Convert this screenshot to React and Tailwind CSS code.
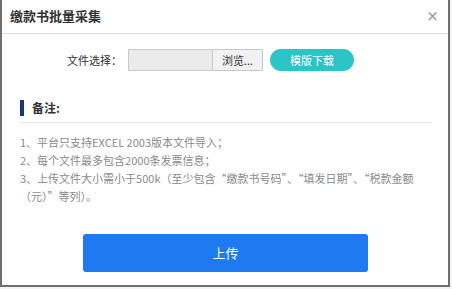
import React from 'react';

const font = { fontFamily: '"Microsoft YaHei", "Noto Sans CJK SC", "Noto Sans", sans-serif' };

const notes = [
    '1、平台只支持EXCEL 2003版本文件导入；',
    '2、每个文件最多包含2000条发票信息；',
];

const App = () => {
    return (
        <div className="w-[452px] h-[289px] bg-[#f4f4f4]" style={font}>
            <div className="w-[450px] h-[287px] bg-white border-l-2 border-r-2 border-b-2 border-[#6f6f6f] flex flex-col">
                {/* Header */}
                <div className="h-[34px] shrink-0 flex items-center justify-between pl-[8px] pr-[9px] border-b border-[#dcdcdc]">
                    <h1 className="text-[13px] font-bold text-[#333] leading-none -mt-[2px]">缴款书批量采集</h1>
                    <button className="text-[#999] text-[13px] font-bold leading-none -mt-[2px]">×</button>
                </div>

                {/* File row */}
                <div className="flex items-center mt-[15px] pl-[65px]">
                    <span className="text-[11px] text-[#333] w-[61px]">文件选择：</span>
                    <div className="w-[85px] h-[22px] bg-[#ebebeb] border border-[#c8c8c8]"></div>
                    <button className="w-[50px] h-[22px] bg-[#f2f2f2] border border-l-0 border-[#c8c8c8] text-[11px] text-[#333]">浏览...</button>
                    <button className="ml-[7px] w-[84px] h-[22px] rounded-full bg-[#2cc5c7] text-white text-[11px]">模版下载</button>
                </div>

                {/* Notes */}
                <div className="mt-[29px] pl-[18px] pr-[16px]">
                    <div className="flex items-center h-[16px]">
                        <span className="w-[4px] h-[16px] bg-[#1d3578]"></span>
                        <span className="ml-[8px] text-[12px] font-bold text-[#333]">备注:</span>
                    </div>
                    <div className="mt-[6px] border-b border-[#e6e6e6]"></div>
                    <div className="mt-[10px] text-[11px] leading-[18px] text-[#8a8a8a]">
                        {notes.map(n => <p key={n}>{n}</p>)}
                        <p>
                            <span className="whitespace-nowrap">3、上传文件大小需小于500k（至少包含“缴款书号码”、“填发日期”、“税款金额</span>
                            <br />
                            （元）”等列）。
                        </p>
                    </div>
                </div>

                {/* Upload */}
                <div className="mt-auto mb-[13px] pl-[81px]">
                    <button className="w-[285px] h-[38px] rounded-[3px] bg-[#1f79f0] text-white text-[13px]">上传</button>
                </div>
            </div>
        </div>
    );
};

export default App;
